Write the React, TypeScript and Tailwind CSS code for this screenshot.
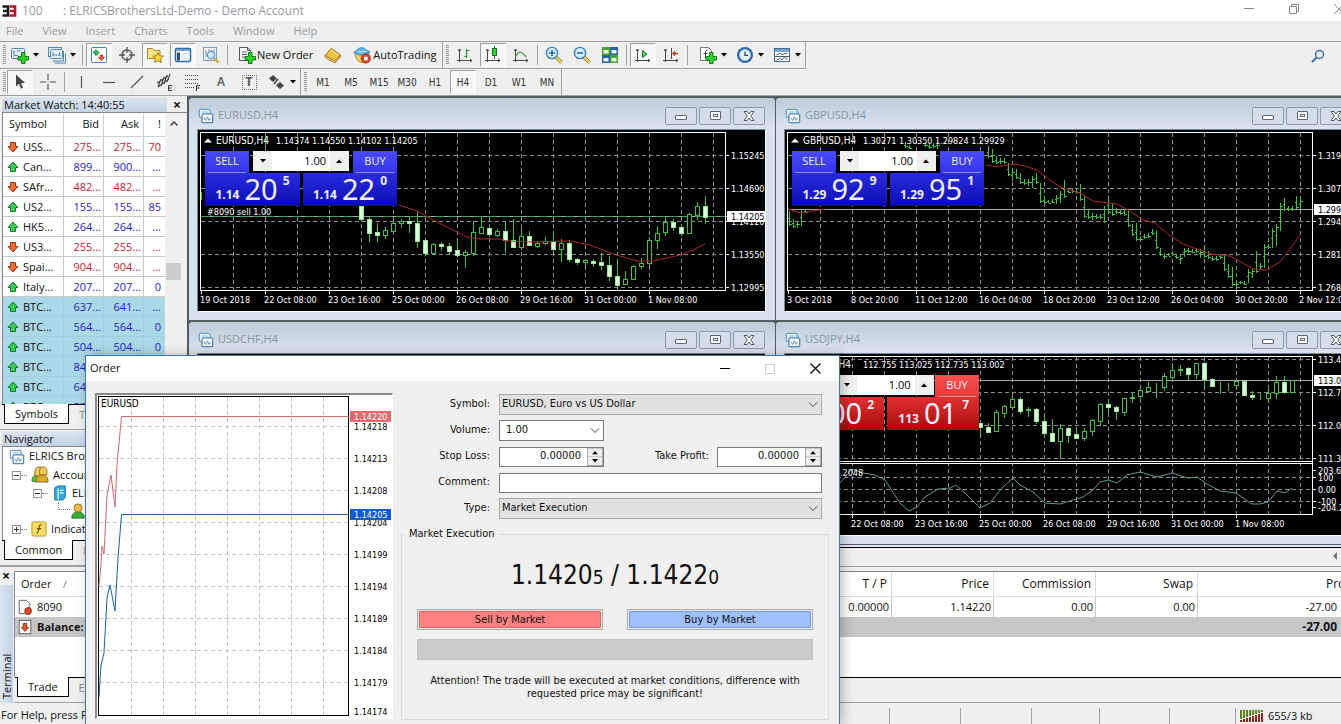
import { FC, ReactNode, useState } from "react";

interface Candle {
  high: number;
  top: number;
  bottom: number;
  low: number;
  filled: boolean;
}

interface Quote {
  symbol: string;
  bid: string;
  ask: string;
  spread: string;
  up: boolean;
  marked?: boolean;
}

interface PriceLabel {
  y: number;
  text: string;
}

// high, body top, body bottom, low, filled
type CandleRow = [number, number, number, number, number];

const toCandles = (rows: CandleRow[]): Candle[] =>
  rows.map(([high, top, bottom, low, filled]) => ({
    high,
    top,
    bottom,
    low,
    filled: filled === 1,
  }));

const eurusdCandles = toCandles([
  [76, 76, 89, 91, 1], [87, 89, 103, 111, 1], [93, 102, 105, 111, 1], [97, 100, 105, 108, 0],
  [92, 93, 101, 101, 0], [89, 91, 93, 97, 0], [87, 91, 93, 102, 1], [81, 93, 111, 117, 1],
  [109, 110, 123, 125, 1], [113, 114, 123, 124, 0], [112, 114, 116, 120, 1], [113, 116, 121, 124, 1],
  [108, 120, 125, 126, 1], [120, 122, 125, 137, 0], [91, 102, 123, 125, 0], [87, 97, 103, 103, 0],
  [97, 98, 104, 106, 1], [99, 101, 105, 106, 0], [91, 101, 110, 122, 1], [89, 110, 117, 117, 1],
  [98, 106, 117, 119, 0], [101, 106, 115, 115, 1], [111, 113, 116, 117, 0], [107, 111, 113, 114, 0],
  [102, 111, 119, 122, 1], [109, 113, 119, 131, 0], [110, 113, 129, 131, 1], [128, 129, 132, 134, 1],
  [129, 130, 132, 137, 0], [129, 131, 133, 136, 1], [123, 132, 135, 139, 1], [126, 135, 146, 150, 1],
  [129, 146, 155, 158, 1], [141, 149, 154, 154, 0], [135, 136, 149, 149, 0], [128, 133, 136, 138, 0],
  [107, 110, 133, 135, 0], [96, 103, 110, 118, 0], [86, 92, 102, 105, 0], [89, 92, 97, 100, 1],
  [94, 97, 103, 105, 1], [83, 84, 103, 103, 0], [72, 76, 85, 89, 0], [66, 76, 87, 93, 1],
]);

const usdjpyCandles = toCandles([
  [68, 69, 73, 83, 1], [69, 73, 78, 78, 1], [56, 58, 77, 77, 0], [51, 52, 59, 63, 0],
  [42, 45, 53, 53, 0], [43, 45, 57, 59, 1], [53, 55, 56, 62, 0], [54, 55, 67, 69, 1],
  [63, 67, 79, 81, 1], [65, 79, 87, 87, 1], [70, 74, 87, 104, 0], [73, 74, 81, 88, 1],
  [73, 80, 84, 84, 1], [74, 77, 84, 86, 0], [65, 66, 77, 81, 0], [49, 50, 67, 71, 0],
  [45, 50, 53, 58, 1], [52, 53, 57, 65, 1], [44, 44, 58, 61, 0], [38, 43, 44, 48, 0],
  [34, 36, 42, 44, 0], [28, 33, 37, 37, 0], [29, 33, 33, 43, 0], [19, 22, 33, 36, 0],
  [9, 16, 23, 26, 0], [11, 15, 16, 21, 0], [13, 14, 20, 25, 1], [9, 9, 20, 24, 0],
  [8, 9, 25, 35, 1], [24, 25, 32, 32, 1], [28, 31, 31, 39, 0], [29, 32, 32, 36, 0],
  [25, 27, 31, 35, 0], [27, 27, 41, 41, 1], [37, 41, 43, 45, 1], [39, 43, 43, 45, 0],
  [34, 39, 44, 47, 0], [22, 28, 39, 44, 0], [22, 28, 38, 39, 1], [26, 26, 38, 38, 0],
]);

// high, low
const gbpusdBars: [number, number][] = [
  [16, 28], [19, 33], [26, 34], [28, 34], [28, 34], [33, 46], [39, 51], [39, 49], [43, 54], [49, 55],
  [49, 56], [46, 58], [43, 54], [53, 73], [66, 74], [70, 73], [69, 73], [65, 74], [61, 73], [50, 68],
  [59, 63], [58, 63], [59, 64], [54, 71], [66, 88], [79, 89], [83, 90], [84, 89], [84, 89], [76, 93],
  [66, 84], [73, 86], [78, 84], [79, 85], [79, 86], [81, 97], [94, 106], [93, 111], [106, 112], [104, 109],
  [103, 108], [99, 105], [101, 119], [118, 126], [123, 129], [123, 126], [121, 126], [124, 129], [125, 134], [118, 127],
  [118, 123], [119, 123], [118, 123], [119, 128], [116, 128], [121, 129], [126, 131], [126, 131], [124, 129], [126, 141],
  [134, 148], [137, 156], [151, 157], [151, 154], [151, 155], [139, 153], [138, 148], [121, 143], [133, 139], [114, 138],
  [114, 119], [98, 118], [94, 116], [73, 101], [68, 81], [76, 81], [76, 81], [66, 79], [68, 81],
];

const quotes: Quote[] = [
  { symbol: "USS...", bid: "275...", ask: "275...", spread: "70", up: false },
  { symbol: "Can...", bid: "899...", ask: "900...", spread: "...", up: true },
  { symbol: "SAfr...", bid: "482...", ask: "482...", spread: "...", up: false },
  { symbol: "US2...", bid: "155...", ask: "155...", spread: "85", up: true },
  { symbol: "HK5...", bid: "264...", ask: "264...", spread: "...", up: true },
  { symbol: "US3...", bid: "255...", ask: "255...", spread: "...", up: false },
  { symbol: "Spai...", bid: "904...", ask: "904...", spread: "...", up: false },
  { symbol: "Italy...", bid: "207...", ask: "207...", spread: "0", up: true },
  { symbol: "BTC...", bid: "637...", ask: "641...", spread: "...", up: true, marked: true },
  { symbol: "BTC...", bid: "564...", ask: "564...", spread: "0", up: true, marked: true },
  { symbol: "BTC...", bid: "504...", ask: "504...", spread: "0", up: true, marked: true },
  { symbol: "BTC...", bid: "847...", ask: "848...", spread: "0", up: true, marked: true },
  { symbol: "BTC...", bid: "645...", ask: "645...", spread: "0", up: true, marked: true },
  { symbol: "BTC...", bid: "883...", ask: "883...", spread: "0", up: true, marked: true },
];

/* ---------- icons ---------- */

const Glyph: FC<{ children: ReactNode; size?: string }> = ({
  children,
  size = "size-[18px]",
}) => (
  <svg viewBox="0 0 18 18" className={`${size} shrink-0`} fill="none" aria-hidden="true">
    {children}
  </svg>
);

const Plus = () => (
  <path d="M10.5 6.5h3.500v4h3.500v3.500h-3.500v3.500h-3.500v-3.500H7v-3.500h3.500z" fill="#2fd42c" stroke="#0b7d12" />
);

const NewChartIcon = () => (
  <Glyph>
    <rect x="0.5" y="2.5" width="13" height="10" rx="1" fill="#e8f3fc" stroke="#4f86b5" />
    <path d="M3 4.5v6M3 9.5h4M2 6h2M6 5h4" stroke="#5a8fbb" />
    <Plus />
  </Glyph>
);

const ProfilesIcon = () => (
  <Glyph>
    <rect x="0.5" y="1.5" width="13" height="9" fill="#dcebf8" stroke="#4f86b5" />
    <path d="M15.5 5v10h-11M17.5 7.5v9.500h-11" stroke="#4f86b5" />
    <rect x="2.5" y="3.5" width="12" height="9" rx="1" fill="#e8f3fc" stroke="#4f86b5" />
    <path d="M5 5.5v5M4 9h9M11.5 6v4" stroke="#5a8fbb" />
  </Glyph>
);

const MarketWatchIcon = () => (
  <Glyph>
    <rect x="1.5" y="1.5" width="15" height="15" rx="1" fill="#fff" stroke="#4380bf" />
    <path d="M6 3.5 3 7h2v2h2.500V7h2z" fill="#39c25a" stroke="#147a2c" strokeWidth="0.7" />
    <path d="M11.5 14.500 8.500 11.500h1.800v-2.500h2.400v2.500h1.800z" fill="#f06040" stroke="#b02010" strokeWidth="0.7" />
  </Glyph>
);

const CrosshairIcon = () => (
  <Glyph>
    <circle cx="9" cy="9" r="5" stroke="#555" strokeWidth="1.5" />
    <path d="M9 1v6M9 11v6M1 9h6M11 9h6" stroke="#555" strokeWidth="1.3" />
  </Glyph>
);

const FolderStarIcon = () => (
  <Glyph>
    <path d="M1.500 2.500h5l1.500 2h6v8h-12.500z" fill="#fbe68a" stroke="#a8881c" />
    <path d="M12 6.500l1.600 3.300 3.700.4-2.700 2.500.8 3.800-3.400-1.900-3.400 1.900.8-3.800-2.700-2.500 3.700-.4z" fill="#ffd83a" stroke="#a07a10" />
  </Glyph>
);

const TerminalIcon = () => (
  <Glyph>
    <rect x="1.5" y="2.5" width="15" height="13" rx="1.5" fill="#fff" stroke="#2f69ab" strokeWidth="1.5" />
    <path d="M2 4h14" stroke="#6fa0d4" strokeWidth="2" />
    <path d="M3 6.5h3v8h-3z" fill="#2e4e78" />
    <path d="M8 7.5h7M8 10h7M8 12.5h7" stroke="#c8dcf0" />
  </Glyph>
);

const TesterIcon = () => (
  <Glyph>
    <rect x="1.5" y="1.5" width="13" height="13" fill="#f4f8fc" stroke="#7f9db8" />
    <path d="M4 4v7M12 3v7M7 3v2M9.5 4v2" stroke="#6f93b3" />
    <circle cx="9" cy="9" r="3.7" fill="#cfe6f7" stroke="#6b9cc6" strokeWidth="1.4" />
    <path d="M12 12l4.500 4.500" stroke="#d4a531" strokeWidth="2.4" />
  </Glyph>
);

const NewOrderIcon = () => (
  <Glyph>
    <path d="M1.500 1.500h8l3 3v10h-11z" fill="#fff" stroke="#555" />
    <path d="M9.500 1.500v3h3M4 6h5M4 8.500h5M4 11h3" stroke="#555" />
    <Plus />
  </Glyph>
);

const BookIcon = () => (
  <Glyph>
    <path d="M7 2.500 16.500 9l-5.500 6.500L1 9.500z" fill="#f0c040" stroke="#9b6a0c" />
    <path d="M1 9.500 11 15.500l5.500-6.500v2L11 17 1 11.500z" fill="#fbe7a6" stroke="#9b6a0c" strokeWidth="0.8" />
    <path d="M7 4l7 5" stroke="#fbe48c" strokeWidth="1.5" />
  </Glyph>
);

const AutoTradingIcon = () => (
  <Glyph>
    <path d="M2 7c0 5 3 9.500 7 9.500s7-4 7-9.500z" fill="#f5cf58" stroke="#a8801c" strokeWidth="0.8" />
    <path d="M.8 6.500C1.500 5 4 5 4.500 4 5.500 1 12 1 13 4c.5 1 3 1 4 2-3 4-13 4-16.200.5z" fill="#5fb4ea" stroke="#2a76ab" strokeWidth="0.8" />
    <path d="M4.500 5c2.500 1.200 6 1.200 8.500 0" stroke="#d5eefb" />
    <circle cx="12.8" cy="12.5" r="4.700" fill="#d8402a" stroke="#8f1d10" strokeWidth="0.6" />
    <rect x="11" y="10.700" width="3.600" height="3.600" fill="#fff" />
  </Glyph>
);

const Axes = () => (
  <path d="M3.500 3v13M1 14.500h15M2 5l1.500-2L5 5M14 13l2 1.500-2 1.500" stroke="#4a4a4a" />
);

const BarChartIcon = () => (
  <Glyph>
    <Axes />
    <path d="M10.500 3v9M8.500 10.500h2M10.500 4.500h3" stroke="#1f8f2f" strokeWidth="1.2" />
  </Glyph>
);

const CandleChartIcon = () => (
  <Glyph>
    <Axes />
    <path d="M10.500 0v13" stroke="#14791f" />
    <rect x="8.5" y="2.5" width="4" height="7" fill="#35d33b" stroke="#14791f" />
  </Glyph>
);

const LineChartIcon = () => (
  <Glyph>
    <Axes />
    <path d="M3.500 11C7 4 9 5 14.500 11" stroke="#3b9a4a" strokeWidth="1.2" />
  </Glyph>
);

const ZoomIcon: FC<{ plus?: boolean }> = ({ plus }) => (
  <Glyph>
    <path d="M11 11l5.500 5.500" stroke="#8f7420" strokeWidth="3.4" />
    <path d="M11 11l5.500 5.500" stroke="#f2d768" strokeWidth="2" />
    <circle cx="7" cy="7" r="5.600" fill="#d6ebfa" stroke="#3e82bd" strokeWidth="1.4" />
    <path d={plus ? "M4 7h6M7 4v6" : "M4 7h6"} stroke="#2d6ca5" strokeWidth="1.6" />
  </Glyph>
);

const TilesIcon = () => (
  <Glyph>
    <path d="M1 1h8v8H1zM9 9h8v8H9z" fill="#49a52c" />
    <path d="M9 1h8v8H9zM1 9h8v8H1z" fill="#2b5fb0" />
    <path d="M2.500 4h5v3.500h-5zM10.500 4h5v3.500h-5zM2.500 12h5v3.500h-5zM10.500 12h5v3.500h-5z" fill="#e6f2e6" />
  </Glyph>
);

const AutoScrollIcon = () => (
  <Glyph>
    <Axes />
    <path d="M8.500 4.500v7l4.500-3.500z" fill="#5fd067" stroke="#14791f" />
  </Glyph>
);

const ShiftIcon = () => (
  <Glyph>
    <Axes />
    <path d="M9.500 2v11" stroke="#4a4a4a" />
    <path d="M16 7.500h-5M13 5.500l-2 2 2 2" stroke="#b04024" strokeWidth="1.3" />
  </Glyph>
);

const IndicatorsIcon = () => (
  <Glyph>
    <path d="M1.500 1.500h8l3 3v10h-11z" fill="#fff" stroke="#777" />
    <path d="M8.500 4.500c-2-.5-2 1-2 2.500v5M4.500 7.500h4" stroke="#444" />
    <Plus />
  </Glyph>
);

const ClockIcon = () => (
  <Glyph>
    <circle cx="9" cy="9" r="8" fill="#2a65a8" />
    <circle cx="9" cy="9" r="5.600" fill="#eaf4fc" stroke="#8fc0e8" />
    <path d="M9 5.500V9.500h3" stroke="#335" strokeWidth="1.2" />
  </Glyph>
);

const TemplateIcon = () => (
  <Glyph>
    <rect x="1.5" y="2.5" width="15" height="13" fill="#fff" stroke="#40698f" />
    <path d="M2 4.500h14" stroke="#7aa7d0" strokeWidth="3" />
    <path d="M2 10.500h14M3.500 9l3-1.500 3 1 5-1.500M3.500 14l3-1.500 2 1 3-2 3 2" stroke="#40566b" />
  </Glyph>
);

const PointerIcon = () => (
  <Glyph>
    <path d="M5 1.500v12l3-2.800 2 5 2-.9-2-4.800h4z" fill="#444" />
  </Glyph>
);

const CrossIcon = () => (
  <Glyph>
    <path d="M9 1v6M9 11v6M1 9h6M11 9h6M8.500 9h1" stroke="#555" strokeWidth="1.2" />
  </Glyph>
);

const StrokeIcon: FC<{ d: string }> = ({ d }) => (
  <Glyph>
    <path d={d} stroke="#555" strokeWidth="1.2" />
  </Glyph>
);

const ChannelIcon = () => (
  <Glyph>
    <path d="M1 10 12 3M2 14 13 6M5 6l-3 8M8 4l-3 9M11 2 8 11M14 1l-3 8" stroke="#4a4a4a" strokeWidth="1.2" />
    <path d="M16 12.500h-3.500v5H16M12.500 15H15.500" stroke="#333" />
  </Glyph>
);

const FiboIcon = () => (
  <Glyph>
    <path d="M1 2.500h13M1 6.500h13M1 10.500h13M1 14.500h9" stroke="#444" strokeDasharray="1 1" />
    <path d="M16 12.500h-3.500V18M12.500 15H15.500" stroke="#333" />
  </Glyph>
);

const ArrowsIcon = () => (
  <Glyph>
    <path d="M5 2 9 5.500 5 9 1 5.500z" fill="#444" />
    <path d="M12 9l4 3.500-4 3.500-4-3.500z" fill="#444" />
    <path d="M6 11l4-5" stroke="#444" strokeWidth="1.5" />
  </Glyph>
);

const ChartWindowIcon = () => (
  <Glyph size="size-4">
    <rect x="1.5" y="1.5" width="12" height="9" rx="1" fill="#f3f9fd" stroke="#6d9fca" strokeWidth="1.4" />
    <rect x="4.5" y="6.5" width="12" height="10" rx="1" fill="#fff" stroke="#4d86bb" strokeWidth="1.4" />
    <path d="M4 4.500h7" stroke="#86b2d8" />
    <path d="M7 11l1.500 3 2-4 2 4 1.500-3" stroke="#4d86bb" />
  </Glyph>
);

const DirectionIcon: FC<{ up: boolean }> = ({ up }) => (
  <svg viewBox="0 0 12 12" className="size-3 shrink-0" aria-hidden="true">
    {up ? (
      <path d="M6 1 11 6.500H8.500V10.500h-5V6.500H1z" fill="#3cc957" stroke="#137a2b" />
    ) : (
      <path d="M6 11 11 5.500H8.500V1.500h-5V5.500H1z" fill="#ee6a3a" stroke="#a8300c" />
    )}
  </svg>
);

const Caret = () => (
  <svg viewBox="0 0 6 4" className="h-1 w-1.5 shrink-0" aria-hidden="true">
    <path d="M0 0h6L3 3.500z" fill="#000" />
  </svg>
);

const Chevron = () => (
  <svg viewBox="0 0 10 6" className="pointer-events-none absolute top-2 right-1 h-1.5 w-2.5" fill="none" aria-hidden="true">
    <path d="M1 .5 5 4.500 9 .5" stroke="#444" />
  </svg>
);

const ServerIcon = () => (
  <Glyph size="size-4">
    <path d="M3 3l4-2h8v13l-3 3H3z" fill="#35a7dd" stroke="#1874a5" />
    <path d="M7 4v13M9 6h4M9 9h4" stroke="#d2effb" strokeWidth="1.5" />
  </Glyph>
);

const UserIcon = () => (
  <Glyph size="size-4">
    <path d="M2 17c0-5 3-7 7-7s7 2 7 7z" fill="#3fae35" stroke="#1c6e18" />
    <circle cx="9" cy="5.5" r="4.500" fill="#e8bd4b" stroke="#94691a" />
  </Glyph>
);

const UsersIcon = () => (
  <Glyph>
    <path d="M1 15c0-4 2-6 5-6v7z" fill="#5fc442" stroke="#2a7a1e" />
    <path d="M4 10c-1-6 1-9 4-9 2 0 3 1 3 3v6z" fill="#f0ce62" stroke="#94691a" />
    <path d="M9 9c-1-5 0-8 3-8s5 3 3.500 8z" fill="#f0ce62" stroke="#94691a" />
    <path d="M5 16c0-5 2-7 6-7s6 2 6 7z" fill="#d9a928" stroke="#94691a" />
  </Glyph>
);

const FunctionIcon = () => (
  <Glyph size="size-4">
    <rect x="1" y="1" width="16" height="16" rx="2" fill="#f7dc62" stroke="#b38f1c" />
    <path d="M12 4.500c-2.500-.8-2.700 1-3.200 4.500S8 13.500 6 13.500M6.500 8.500h5" stroke="#6d5207" strokeWidth="1.4" />
  </Glyph>
);

/* ---------- tool bars ---------- */

const Grip = () => (
  <div className="ml-[3px] h-5 w-[3px] shrink-0 bg-[repeating-linear-gradient(#9a9a9a_0_1px,#efefef_1px_2px)]" />
);

const Divider = () => <div className="mx-0.5 h-5 w-px shrink-0 bg-[#a0a0a0]" />;

const ToolButton: FC<{ label: string; pressed?: boolean; menu?: boolean; children: ReactNode }> = ({
  label,
  pressed,
  menu,
  children,
}) => (
  <button
    type="button"
    aria-label={label}
    className={`flex h-6 shrink-0 items-center justify-center gap-1 border ${
      menu ? "w-[37px]" : "mx-px w-[26px]"
    } ${
      pressed
        ? "border-t-[#a0a0a0] border-r-[#fafafa] border-b-[#fafafa] border-l-[#a0a0a0] bg-[#f7f7f7]"
        : "border-transparent"
    }`}
  >
    {children}
    {menu && <Caret />}
  </button>
);

const MenuBar = () => (
  <nav className="flex h-5 shrink-0 items-center gap-[7px] bg-[#efefef] text-[#9a9a9a]">
    {["File", "View", "Insert", "Charts", "Tools", "Window", "Help"].map((item) => (
      <button key={item} type="button" className="px-1.5">
        {item}
      </button>
    ))}
  </nav>
);

const StandardToolbar = () => (
  <div className="flex h-[27px] shrink-0 items-center bg-[#efefef]">
    <div className="flex h-full items-center border-b border-[#a0a0a0]">
      <Grip />
      <ToolButton label="New chart" menu><NewChartIcon /></ToolButton>
      <ToolButton label="Profiles" menu><ProfilesIcon /></ToolButton>
      <Divider />
      <ToolButton label="Market Watch" pressed><MarketWatchIcon /></ToolButton>
      <ToolButton label="Data Window"><CrosshairIcon /></ToolButton>
      <ToolButton label="Navigator" pressed><FolderStarIcon /></ToolButton>
      <ToolButton label="Terminal" pressed><TerminalIcon /></ToolButton>
      <ToolButton label="Strategy Tester"><TesterIcon /></ToolButton>
      <Divider />
      <button type="button" className="flex items-center gap-px pr-1.5 pl-2">
        <NewOrderIcon />
        New Order
      </button>
      <ToolButton label="MetaEditor"><BookIcon /></ToolButton>
      <button type="button" className="flex items-center gap-0.5 px-1.5">
        <AutoTradingIcon />
        AutoTrading
      </button>
      <div className="h-full w-px bg-[#a0a0a0]" />
      <Grip />
      <div className="ml-0.5 flex items-center">
        <ToolButton label="Bar chart"><BarChartIcon /></ToolButton>
        <ToolButton label="Candlesticks" pressed><CandleChartIcon /></ToolButton>
        <ToolButton label="Line chart"><LineChartIcon /></ToolButton>
      </div>
      <Divider />
      <ToolButton label="Zoom in"><ZoomIcon plus /></ToolButton>
      <ToolButton label="Zoom out"><ZoomIcon /></ToolButton>
      <ToolButton label="Tile windows"><TilesIcon /></ToolButton>
      <Divider />
      <ToolButton label="Auto scroll" pressed><AutoScrollIcon /></ToolButton>
      <ToolButton label="Chart shift"><ShiftIcon /></ToolButton>
      <Divider />
      <div className="ml-1 flex items-center">
        <ToolButton label="Indicators" menu><IndicatorsIcon /></ToolButton>
        <ToolButton label="Periods" menu><ClockIcon /></ToolButton>
        <ToolButton label="Templates" menu><TemplateIcon /></ToolButton>
      </div>
      <div className="h-full w-px bg-[#a0a0a0]" />
    </div>
    <button type="button" aria-label="Search" className="mr-4 ml-auto">
      <svg viewBox="0 0 14 14" className="size-3.5" fill="none" aria-hidden="true">
        <circle cx="8.5" cy="5.5" r="4" stroke="#3d6fb0" strokeWidth="1.5" />
        <path d="M5.500 8.500 1 13" stroke="#3d6fb0" strokeWidth="2" />
      </svg>
    </button>
  </div>
);

const LineToolbar = () => (
  <div className="flex h-[27px] shrink-0 items-center border-b border-[#a0a0a0] bg-[#efefef] text-[#333]">
    <Grip />
    <ToolButton label="Cursor" pressed><PointerIcon /></ToolButton>
    <ToolButton label="Crosshair"><CrossIcon /></ToolButton>
    <Divider />
    <ToolButton label="Vertical line"><StrokeIcon d="M9.500 3v12" /></ToolButton>
    <ToolButton label="Horizontal line"><StrokeIcon d="M3 9.500h12" /></ToolButton>
    <ToolButton label="Trendline"><StrokeIcon d="M3 15 15 3" /></ToolButton>
    <ToolButton label="Equidistant channel"><ChannelIcon /></ToolButton>
    <ToolButton label="Fibonacci retracement"><FiboIcon /></ToolButton>
    <ToolButton label="Text"><span className="text-[12px] font-semibold text-[#555]">A</span></ToolButton>
    <ToolButton label="Text label">
      <span className="flex size-[15px] items-center justify-center border border-dotted border-[#777] text-[12px] font-bold text-[#555]">T</span>
    </ToolButton>
    <ToolButton label="Arrows" menu><ArrowsIcon /></ToolButton>
    <div className="h-full w-px bg-[#a0a0a0]" />
    <Grip />
    <div className="ml-0.5 flex items-center">
      {["M1", "M5", "M15", "M30", "H1", "H4", "D1", "W1", "MN"].map((period) => (
        <ToolButton key={period} label={period} pressed={period === "H4"}>
          <span className="font-['DejaVu_Sans_Condensed','Noto_Sans',sans-serif] text-[10px]">{period}</span>
        </ToolButton>
      ))}
    </div>
    <div className="h-full w-px bg-[#a0a0a0]" />
  </div>
);

/* ---------- left side panels ---------- */

const PanelTitle: FC<{ children: ReactNode; closable?: boolean }> = ({ children, closable }) => (
  <div className="mt-px ml-0.5 flex h-[15px] shrink-0 items-center">
    <h2 className="flex-1 bg-linear-to-b from-[#dce6f1] to-[#c3d2e3] pl-0.5 leading-[15px]">{children}</h2>
    {closable && (
      <button type="button" aria-label="Close" className="w-5 text-center text-[14px] font-bold leading-3">
        ×
      </button>
    )}
  </div>
);

const PanelTabs: FC<{ active: string; other: string }> = ({ active, other }) => (
  <div className="flex h-[26px] shrink-0 items-start border-b border-[#a0a0a0] pl-0.5">
    <div className="h-px w-0.5 bg-black" />
    <button type="button" className="h-5 border-x border-b border-black bg-white px-2.5 text-[11px] leading-[18px]">
      {active}
    </button>
    <button type="button" className="h-5 flex-1 overflow-hidden border-t border-black pl-2.5 text-left text-[11px] leading-[18px] whitespace-nowrap text-[#888]">
      {other}
    </button>
  </div>
);

const MarketWatch = () => (
  <section className="flex min-h-0 flex-1 flex-col">
    <PanelTitle closable>Market Watch: 14:40:55</PanelTitle>
    <div className="ml-0.5 flex min-h-0 flex-1 overflow-hidden border-t border-l border-[#828790]">
      <table className="w-[162px] table-fixed border-separate border-spacing-0 self-start bg-white">
        <colgroup>
          <col className="w-[61px]" />
          <col className="w-10" />
          <col className="w-10" />
          <col />
        </colgroup>
        <thead>
          <tr className="h-6">
            <th className="border-r border-b border-[#d0d0d0] pl-1.5 text-left font-normal">Symbol</th>
            <th className="border-r border-b border-[#d0d0d0] pr-1 text-right font-normal">Bid</th>
            <th className="border-r border-b border-[#d0d0d0] pr-1 text-right font-normal">Ask</th>
            <th className="border-b border-[#d0d0d0] pr-1 text-right font-normal">!</th>
          </tr>
        </thead>
        <tbody>
          {quotes.map((quote, index) => {
            const line = quote.marked ? "border-[#a2cfe0]" : "border-[#c8c8c8]";
            const color = quote.up ? "text-[#1c1ccc]" : "text-[#c8202c]";
            return (
              <tr key={index} className={quote.marked ? "bg-[#abd8e6]" : "bg-white"}>
                <td className={`h-5 border-r border-b pl-1 ${line}`}>
                  <span className="flex items-center gap-1 leading-4">
                    <DirectionIcon up={quote.up} />
                    {quote.symbol}
                  </span>
                </td>
                <td className={`border-r border-b pr-0.5 text-right leading-4 ${line} ${color}`}>{quote.bid}</td>
                <td className={`border-r border-b pr-0.5 text-right leading-4 ${line} ${color}`}>{quote.ask}</td>
                <td className={`border-b pr-1 text-right leading-4 ${line} ${color}`}>{quote.spread}</td>
              </tr>
            );
          })}
        </tbody>
      </table>
      <div className="flex w-[17px] flex-col items-center bg-[#f0f0f0]">
        <svg viewBox="0 0 8 5" className="mt-2 h-[5px] w-2" fill="none" aria-hidden="true">
          <path d="M.5 4.500 4 1l3.500 3.500" stroke="#444" strokeWidth="1.5" />
        </svg>
        <div className="mt-[137px] h-[17px] w-[15px] bg-[#cdcdcd]" />
      </div>
    </div>
    <PanelTabs active="Symbols" other="Tick Chart" />
  </section>
);

const Expander: FC<{ open?: boolean }> = ({ open }) => (
  <span className="flex shrink-0 items-center">
    <svg viewBox="0 0 9 9" className="size-[9px]" aria-hidden="true">
      <rect x="0.5" y="0.5" width="8" height="8" fill="#fff" stroke="#919191" />
      <path d={open ? "M2 4.500h5" : "M2 4.500h5M4.500 2v5"} stroke="#333" />
    </svg>
    <span className="w-1.5 border-t border-dotted border-[#808080]" />
  </span>
);

const Navigator = () => (
  <section className="flex h-[136px] shrink-0 flex-col">
    <PanelTitle>Navigator</PanelTitle>
    <ul className="ml-0.5 min-h-0 flex-1 overflow-hidden border-t border-l border-[#828790] bg-white whitespace-nowrap">
      <li className="flex h-[19px] items-center gap-1 pl-1.5"><ChartWindowIcon />ELRICS Brothers</li>
      <li className="flex h-[18px] items-center gap-1 pl-[9px]"><Expander open /><UsersIcon />Accounts</li>
      <li className="flex h-[18px] items-center gap-1 pl-[30px]"><Expander open /><ServerIcon />ELRICS</li>
      <li className="flex h-[18px] items-center pl-[55px]">
        <span className="h-2 w-3 self-start border-b border-l border-dotted border-[#808080]" />
        <UserIcon />
      </li>
      <li className="flex h-[18px] items-center gap-1 pl-[9px]"><Expander /><FunctionIcon />Indicators</li>
    </ul>
    <PanelTabs active="Common" other="Favorites" />
  </section>
);

/* ---------- charts ---------- */

const CANDLE_STEP = 8;
const BAR_STEP = 4;

const CandleSeries: FC<{ candles: Candle[]; start: number }> = ({ candles, start }) => (
  <g stroke="#44c044" shapeRendering="crispEdges">
    {candles.map((c, i) => {
      const x = start + i * CANDLE_STEP;
      return (
        <g key={i}>
          <path d={`M${x} ${c.high}V${c.low + 1}`} />
          <rect
            x={x - 2}
            y={c.top + 0.5}
            width={4}
            height={Math.max(c.bottom - c.top, 0)}
            fill={c.filled ? "#d8ffd8" : "#000"}
            stroke={c.filled ? "#9be89b" : "#44c044"}
          />
        </g>
      );
    })}
  </g>
);

const BarSeries: FC<{ bars: [number, number][]; start: number }> = ({ bars, start }) => (
  <g stroke="#44c044" shapeRendering="crispEdges">
    {bars.map(([high, low], i) => {
      const x = start + i * BAR_STEP;
      const next = bars[i + 1];
      const close = next && next[0] + next[1] > high + low ? low - 2 : high + 3;
      return <path key={i} d={`M${x} ${high}V${low}M${x} ${close + 0.5}h2M${x - 2} ${(high + low) / 2}h2`} />;
    })}
  </g>
);

interface ChartProps {
  title: string;
  quote: string;
  times: string[];
  prices: PriceLabel[];
  gridRows: number[];
  last: PriceLabel;
  divided?: boolean;
  children?: ReactNode;
}

const Chart: FC<ChartProps> = ({ title, quote, times, prices, gridRows, last, divided, children }) => (
  <svg
    viewBox="0 0 567 181"
    className="block h-[181px] w-[567px] bg-black font-['DejaVu_Sans_Condensed','Noto_Sans',sans-serif] text-[9px]"
    fill="none"
    role="img"
    aria-label={title}
  >
    <g stroke="#8a8f94" strokeDasharray="4 3" shapeRendering="crispEdges">
      {Array.from({ length: 16 }, (_, i) => (
        <path key={i} d={`M${35.5 + i * 32} 3V160`} />
      ))}
      {gridRows.map((y) => (
        <path key={y} d={`M3 ${y + 0.5}H527`} />
      ))}
    </g>
    <path d={`M3 ${last.y + 0.5}H532`} stroke="#a4a8a8" shapeRendering="crispEdges" />
    {children}
    <g stroke="#fff" shapeRendering="crispEdges">
      <rect x="2.5" y="2.5" width="525" height="158" />
      {divided && <path d="M3 107.500H527M3 109.500H527" />}
      {divided && <path d="M3 108.500H527" stroke="#000" />}
      {times.map((time, i) => (
        <path key={time} d={`M${3.5 + i * 64} 161v3`} />
      ))}
      {prices.map((price) => (
        <path key={price.text} d={`M528 ${price.y + 0.5}h3`} />
      ))}
    </g>
    <g fill="#fff">
      <path d="M6 12.500h8l-4-4z" />
      <text x="18" y="14" className="text-[10px]">{title}</text>
      <text x="78" y="14">{quote}</text>
      {times.map((time, i) => (
        <text key={time} x={2 + i * 64} y="173">{time}</text>
      ))}
      {prices.map((price) => (
        <text key={price.text} x="533" y={price.y + 4}>{price.text}</text>
      ))}
      <rect x="529" y={last.y - 5} width="38" height="11" />
    </g>
    <text x="533" y={last.y + 4} fill="#000">{last.text}</text>
  </svg>
);

interface DealProps {
  base: string;
  sell: [string, string];
  buy: [string, string];
  red?: boolean;
}

// One click trading block in the corner of a chart
const QuickDeal: FC<DealProps> = ({ base, sell, buy, red }) => {
  const tab = red
    ? "bg-linear-to-b from-[#f85050] to-[#e83a3a]"
    : "bg-linear-to-b from-[#4a4af8] to-[#3434ee]";
  const rule = red ? "border-[#ff9a9a]" : "border-[#8f8fff]";
  const price = red
    ? "bg-linear-to-b from-[#e03030] to-[#a80808]"
    : "bg-linear-to-b from-[#2b2be0] to-[#0a0ab0]";
  return (
    <div className={`absolute top-[21px] left-[7px] text-[#eef] ${red ? "w-[187px]" : "w-[192px]"}`}>
      <div className="flex items-start justify-between">
        <button type="button" className={`h-[22px] w-11 px-[3px] leading-5 ${tab}`}>
          <span className={`block h-[22px] border-b ${rule}`}>SELL</span>
        </button>
        <div className="flex h-5 w-24 bg-[#f0f0f0]">
          <button type="button" aria-label="Less" className="flex w-[19px] items-center justify-center"><Caret /></button>
          <input
            aria-label="Lots"
            defaultValue="1.00"
            className="w-[58px] min-w-0 bg-white pr-1 text-right text-[11px] text-black"
          />
          <button type="button" aria-label="More" className="flex w-[19px] rotate-180 items-center justify-center"><Caret /></button>
        </div>
        <button type="button" className={`h-[22px] w-11 px-[3px] leading-5 ${tab}`}>
          <span className={`block h-[22px] border-b ${rule}`}>BUY</span>
        </button>
      </div>
      <div className="grid grid-cols-2 gap-x-[3px]">
        {[sell, buy].map(([big, small], i) => (
          <button
            key={i}
            type="button"
            className={`flex h-[33px] items-start justify-end gap-[5px] pr-2.5 font-['Noto_Sans',sans-serif] ${price}`}
          >
            <span className="mt-[14px] text-[12px] font-bold leading-4">{base}</span>
            <span className="text-[29px] leading-8">{big}</span>
            <span className="mt-0.5 text-[12px] font-bold leading-3">{small}</span>
          </button>
        ))}
      </div>
    </div>
  );
};

const frameButton =
  "flex h-[18px] w-8 items-center justify-center rounded-[2px] border border-[#8d9cad] bg-[#d3deea]";

const ChartWindow: FC<{ title: string; children: ReactNode }> = ({ title, children }) => (
  <section className="w-[586px] shrink-0 rounded-t-[4px] bg-[#d8e2ed] pb-2 pl-2">
    <header className="-ml-2 flex h-[31px] items-center rounded-t-[4px] bg-linear-to-b from-[#bccbda] to-[#dae4ee] pt-1 pl-[9px]">
      <ChartWindowIcon />
      <h3 className="ml-1 flex-1 text-[11px] text-[#8a96a2]">{title}</h3>
      <div className="mr-2.5 flex gap-0.5">
        <button type="button" aria-label="Minimize" className={frameButton}>
          <span className="mt-1 h-[5px] w-3 rounded-[1px] border border-[#5b6878] bg-white" />
        </button>
        <button type="button" aria-label="Restore" className={frameButton}>
          <span className="flex h-[9px] w-[11px] items-center justify-center rounded-[1px] border border-[#5b6878] bg-white">
            <span className="h-[3px] w-[5px] border border-[#5b6878]" />
          </span>
        </button>
        <button type="button" aria-label="Close" className={frameButton}>
          <svg viewBox="0 0 12 10" className="h-2.5 w-3" aria-hidden="true">
            <path d="M1 .5h3L6 3 8 .5h3L7.700 5 11 9.500H8L6 7 4 9.500H1L4.300 5z" fill="#fff" stroke="#4c5866" />
          </svg>
        </button>
      </div>
    </header>
    <div className="relative h-[183px] w-[569px] overflow-hidden border border-t-[#7c8894] border-r-white border-b-white border-l-[#7c8894] bg-black">
      {children}
    </div>
  </section>
);

const EurUsdWindow = () => (
  <ChartWindow title="EURUSD,H4">
    <Chart
      title="EURUSD,H4"
      quote="1.14374 1.14550 1.14102 1.14205"
      times={["19 Oct 2018", "22 Oct 08:00", "23 Oct 16:00", "25 Oct 00:00", "26 Oct 08:00", "29 Oct 16:00", "31 Oct 00:00", "1 Nov 08:00"]}
      gridRows={[25, 58, 91, 124, 157]}
      prices={[
        { y: 25, text: "1.15245" },
        { y: 58, text: "1.14690" },
        { y: 91, text: "1.14120" },
        { y: 124, text: "1.13550" },
        { y: 157, text: "1.12995" },
      ]}
      last={{ y: 86, text: "1.14205" }}
    >
      <path d="M3 86.500H527" stroke="#3f9f5a" strokeDasharray="9 4" />
      <path d="M67.500 8v10M3.500 62v8" stroke="#44c044" />
      <CandleSeries candles={eurusdCandles} start={163.5} />
      <polyline
        points="201,75 219,81 239,92 269,107 282,109 302,109 309,111 332,112 372,111 392,115 415,124 439,131 455,131 482,125 495,120 507,114"
        stroke="#b02626"
      />
      <text x="9" y="85" fill="#fff">#8090 sell 1.00</text>
    </Chart>
    <QuickDeal base="1.14" sell={["20", "5"]} buy={["22", "0"]} />
  </ChartWindow>
);

const GbpUsdWindow = () => (
  <ChartWindow title="GBPUSD,H4">
    <Chart
      title="GBPUSD,H4"
      quote="1.30271 1.30350 1.29824 1.29929"
      times={["3 Oct 2018", "8 Oct 20:00", "11 Oct 12:00", "16 Oct 04:00", "18 Oct 20:00", "23 Oct 12:00", "26 Oct 04:00", "30 Oct 20:00", "2 Nov 12:00"]}
      gridRows={[25, 58, 91, 124, 157]}
      prices={[
        { y: 25, text: "1.319" },
        { y: 58, text: "1.307" },
        { y: 91, text: "1.294" },
        { y: 124, text: "1.281" },
        { y: 157, text: "1.268" },
      ]}
      last={{ y: 79, text: "1.299" }}
    >
      <BarSeries bars={[[81, 96], [89, 98], [91, 98], [79, 96], [79, 83]]} start={4.5} />
      <BarSeries bars={[[12, 18], [15, 19]]} start={120.5} />
      <BarSeries bars={[[13, 17], [14, 19], [13, 18], [12, 19]]} start={140.5} />
      <BarSeries bars={gbpusdBars} start={203.5} />
      <polyline points="3,79 16,83 40,79" stroke="#b02626" />
      <polyline
        points="201,35 212,37 228,34 240,36 252,40 265,50 275,57 285,60 295,63 308,71 332,74 345,81 358,90 370,93 384,105 398,114 412,119 425,124 445,126 458,133 468,139 482,140 495,132 505,119 515,105"
        stroke="#b02626"
      />
    </Chart>
    <QuickDeal base="1.29" sell={["92", "9"]} buy={["95", "1"]} />
  </ChartWindow>
);

const UsdJpyWindow = () => (
  <ChartWindow title="USDJPY,H4">
    <Chart
      title="USDJPY,H4"
      quote="112.755 113.025 112.735 113.002"
      times={["19 Oct 2018", "22 Oct 08:00", "23 Oct 16:00", "25 Oct 00:00", "26 Oct 08:00", "29 Oct 16:00", "31 Oct 00:00", "1 Nov 08:00"]}
      gridRows={[5, 38, 71, 104, 123, 135, 147]}
      prices={[
        { y: 5, text: "113.4" },
        { y: 38, text: "112.7" },
        { y: 71, text: "112.0" },
        { y: 104, text: "111.3" },
        { y: 116, text: "203.67" },
        { y: 123, text: "100" },
        { y: 135, text: "0.00" },
        { y: 147, text: "-100" },
        { y: 153, text: "-204.2" },
      ]}
      last={{ y: 26, text: "113.0" }}
      divided
    >
      <CandleSeries candles={usdjpyCandles} start={195.5} />
      <polyline
        points="55,129 67,115 78,119 90,121 100,126 115,149 124,157 132,153 140,143 153,135 165,134 171,131 182,141 195,154 205,149 218,133 228,124 235,131 248,138 260,149 275,150 285,147 298,143 308,136 315,128 323,126 332,129 342,121 355,118 372,123 387,119 403,124 412,123 422,130 435,137 451,139 467,150 475,150 483,148 492,137 500,139 507,134"
        stroke="#5f9a94"
      />
      <text x="55" y="122" fill="#fff">.2048</text>
    </Chart>
    <QuickDeal base="113" sell={["00", "2"]} buy={["01", "7"]} red />
  </ChartWindow>
);

const Workspace = () => (
  <div className="flex min-w-0 flex-1 flex-col overflow-hidden">
    <div className="grid shrink-0 grid-cols-[586px_586px] gap-x-px gap-y-0.5 border-t-2 border-b border-l-2 border-[#555b63] bg-[#555b63]">
      <EurUsdWindow />
      <GbpUsdWindow />
      <ChartWindow title="USDCHF,H4">
        <div />
      </ChartWindow>
      <UsdJpyWindow />
    </div>
    <div className="h-[3px] shrink-0 border-b border-black bg-[#e3e8ee]" />
    <div className="flex flex-1 items-start justify-end pt-1 pr-1">
      <svg viewBox="0 0 4 8" className="h-2 w-1" aria-hidden="true">
        <path d="M4 0v8L0 4z" fill="#777" />
      </svg>
    </div>
  </div>
);

/* ---------- terminal ---------- */

const headCell = "border-r border-b border-[#dcdcdc] pr-1 text-right font-normal";
const bodyCell = "border-r border-[#c8c8c8] pr-0.5 text-right";

const Terminal = () => (
  <section className="flex h-[137px] shrink-0 border-t border-[#a0a0a0] bg-[#efefef]">
    <div className="flex w-3.5 shrink-0 flex-col items-start">
      <button type="button" aria-label="Close terminal" className="h-[18px] w-3 text-[14px] font-bold leading-4">×</button>
      <h2 className="w-[13px] flex-1 rotate-180 bg-linear-to-l from-[#dce6f1] to-[#c3d2e3] pt-1 text-[11px] leading-[13px] [writing-mode:vertical-rl]">
        Terminal
      </h2>
    </div>
    <div className="mt-1 flex min-w-0 flex-1 flex-col">
      <div className="min-h-0 flex-1 overflow-hidden border-t border-l border-[#828790] bg-white">
        <table className="w-full table-fixed border-separate border-spacing-0">
          <colgroup>
            <col />
            <col className="w-[102px]" />
            <col className="w-[102px]" />
            <col className="w-[102px]" />
            <col className="w-[102px]" />
            <col className="w-[143px]" />
          </colgroup>
          <thead>
            <tr className="h-[25px] text-[12px]">
              <th className="border-b border-[#dcdcdc] pl-1.5 text-left text-[11px] font-normal">
                <span className="flex items-center gap-3">
                  Order
                  <svg viewBox="0 0 4 7" className="h-[7px] w-1" aria-hidden="true">
                    <path d="M.5 7 3.500 0" stroke="#888" />
                  </svg>
                </span>
              </th>
              <th className={headCell}>T / P</th>
              <th className={headCell}>Price</th>
              <th className={headCell}>Commission</th>
              <th className={headCell}>Swap</th>
              <th className="overflow-hidden border-b border-[#dcdcdc] pl-32 text-left font-normal whitespace-nowrap">Profit</th>
            </tr>
          </thead>
          <tbody>
            <tr className="h-5">
              <td>
                <span className="flex items-center gap-1 pl-0.5 leading-4">
                  <Glyph size="size-4">
                    <path d="M2.500 1.500h8l4 4v11h-12z" fill="#fff" stroke="#555" />
                    <circle cx="12.5" cy="13.5" r="3.800" fill="#dc4a2a" stroke="#8d2411" />
                  </Glyph>
                  8090
                </span>
              </td>
              <td className={bodyCell}>0.00000</td>
              <td className={bodyCell}>1.14220</td>
              <td className={bodyCell}>0.00</td>
              <td className={bodyCell}>0.00</td>
              <td className="pr-1 text-right">-27.00</td>
            </tr>
            <tr className="h-5 bg-[#c6c6c6] font-bold">
              <td colSpan={5}>
                <span className="flex items-center gap-1 pl-0.5 leading-4">
                  <Glyph size="size-4">
                    <rect x="2.5" y="1.5" width="13" height="15" fill="#fff" stroke="#555" />
                    <path d="M9 14 13 9.500h-2V5H7v4.500H5z" fill="#dc5a2a" stroke="#8d2411" />
                  </Glyph>
                  Balance:
                </span>
              </td>
              <td className="pr-1 text-right text-[12px]">-27.00</td>
            </tr>
          </tbody>
        </table>
      </div>
      <div className="flex h-[26px] items-start border-b border-[#a0a0a0] pl-px">
        <div className="h-px w-0.5 bg-black" />
        <button type="button" className="h-5 border-x border-b border-black bg-white px-2.5 leading-[18px]">Trade</button>
        <button type="button" className="h-5 flex-1 border-t border-black pl-2.5 text-left leading-[18px] text-[#888]">
          Exposure
        </button>
      </div>
    </div>
  </section>
);

const StatusBar = () => (
  <footer className="flex h-[21px] shrink-0 items-end bg-[#efefef]">
    <p className="flex-1 pb-px pl-px leading-4">For Help, press F1</p>
    <div className="h-4 w-[71px] border-l border-[#a0a0a0]" />
    <div className="h-4 w-[71px] border-l border-[#a0a0a0]" />
    <div className="h-4 w-[68px] border-l border-[#a0a0a0]" />
    <div className="h-4 w-[70px] border-l border-[#a0a0a0]" />
    <div className="h-4 w-[66px] border-l border-[#a0a0a0]" />
    <div className="flex h-4 w-[106px] items-center gap-1 border-l border-[#a0a0a0] pl-1">
      <svg viewBox="0 0 24 14" className="h-3.5 w-6" aria-hidden="true">
        {Array.from({ length: 8 }, (_, i) => (
          <g key={i}>
            <rect x={i * 3} y="1" width="2" height={9 - i} fill="#5d7f1c" />
            <rect x={i * 3} y={11 - i} width="2" height={2 + i} fill="#8a2a1c" />
          </g>
        ))}
      </svg>
      655/3 kb
    </div>
  </footer>
);

/* ---------- order dialog ---------- */

const tickRows = ["1.14218", "1.14213", "1.14208", "1.14204", "1.14199", "1.14194", "1.14189", "1.14184", "1.14179"];

const TickChart = () => (
  <div className="mt-3 w-[298px] shrink-0 self-start border-t-2 border-r border-b border-l-2 border-t-[#8a8a8a] border-r-white border-b-white border-l-[#8a8a8a] bg-white">
    <svg viewBox="0 0 295 323" className="block h-[323px] w-[295px] text-[9px]" fill="none" role="img" aria-label="EURUSD ticks">
      <g stroke="#c4c4c4" strokeDasharray="4 3" shapeRendering="crispEdges">
        {Array.from({ length: 7 }, (_, i) => (
          <path key={i} d={`M${34.5 + i * 32} 2V320`} />
        ))}
        {tickRows.map((row, i) => (
          <path key={row} d={`M2 ${31.5 + i * 32}H251`} />
        ))}
      </g>
      <rect x="1.5" y="1.5" width="250" height="319" stroke="#000" shapeRendering="crispEdges" />
      <polyline points="2,191 4,170 5,151 7,159 10,100 14,80 18,112 20,70 24.5,21.5 252,21.5" stroke="#d4676f" />
      <polyline points="2,302 4,270 7,258 10,203 13,190 18,216 21,163 24.5,119.5 252,119.5" stroke="#1d5fa8" />
      <g fill="#000">
        <text x="4" y="12" className="text-[10px]">EURUSD</text>
        {tickRows.map((row, i) => (
          <text key={row} x="257" y={35 + i * 32}>{row}</text>
        ))}
        <text x="257" y="320">1.14174</text>
      </g>
      <rect x="253" y="16" width="41" height="11" fill="#ea6770" />
      <text x="257" y="25" fill="#fff">1.14220</text>
      <rect x="253" y="114" width="41" height="11" fill="#0f5cd0" />
      <text x="257" y="123" fill="#fff">1.14205</text>
    </svg>
  </div>
);

const Spinner: FC<{ id: string; value: string; onChange: (value: string) => void }> = ({
  id,
  value,
  onChange,
}) => (
  <div className="flex h-5 w-[105px] border border-[#7a7a7a] bg-white">
    <input
      id={id}
      value={value}
      onChange={(e) => onChange(e.target.value)}
      className="w-full min-w-0 flex-1 bg-transparent pr-1.5 text-right"
    />
    <div className="flex w-4 flex-col gap-px bg-[#a8a8a8] p-px">
      <button type="button" aria-label="Increase" className="flex flex-1 rotate-180 items-center justify-center bg-[#f0f0f0]"><Caret /></button>
      <button type="button" aria-label="Decrease" className="flex flex-1 items-center justify-center bg-[#f0f0f0]"><Caret /></button>
    </div>
  </div>
);

const OrderDialog = () => {
  const [stopLoss, setStopLoss] = useState("0.00000");
  const [takeProfit, setTakeProfit] = useState("0.00000");
  const [comment, setComment] = useState("");

  return (
    <div
      role="dialog"
      aria-label="Order"
      className="absolute top-[355px] bottom-0 left-[85px] flex w-[755px] flex-col overflow-hidden border border-b-0 border-[#3b79a8] bg-[#f0f0f0] font-['DejaVu_Sans_Condensed','Noto_Sans',sans-serif] text-[11px] shadow-[3px_0_10px_rgba(0,0,0,0.25)]"
    >
      <header className="flex h-[25px] shrink-0 items-center bg-white pr-[18px] pl-1">
        <h2 className="flex-1 font-['Open_Sans','Noto_Sans',sans-serif] text-[11px]">Order</h2>
        <div className="flex items-center gap-[35px]">
          <button type="button" aria-label="Minimize" className="flex size-2.5 items-center"><span className="h-px w-full bg-black" /></button>
          <button type="button" aria-label="Maximize" disabled className="size-2.5 border border-[#ccc]" />
          <button type="button" aria-label="Close">
            <svg viewBox="0 0 11 11" className="size-[11px]" aria-hidden="true">
              <path d="M.5.5l10 10M10.500.5l-10 10" stroke="#000" strokeWidth="1.2" />
            </svg>
          </button>
        </div>
      </header>
      <form className="flex pr-2.5 pl-[9px]" onSubmit={(e) => e.preventDefault()}>
        <TickChart />
        <div className="ml-2 min-w-0 flex-1 pt-[13px]">
          <div className="grid grid-cols-[89px_1fr] items-center gap-x-[9px] gap-y-[5px] pr-[7px]">
            <label htmlFor="symbol" className="text-right">Symbol:</label>
            <div className="relative">
              <select id="symbol" className="h-[21px] w-full appearance-none border border-[#a8a8a8] bg-[#e1e1e1] pl-0.5">
                <option>EURUSD, Euro vs US Dollar</option>
              </select>
              <Chevron />
            </div>
            <label htmlFor="volume" className="text-right">Volume:</label>
            <div className="relative w-[105px]">
              <select id="volume" className="h-[21px] w-full appearance-none border border-[#7a7a7a] bg-white pl-1.5">
                <option>1.00</option>
              </select>
              <Chevron />
            </div>
            <label htmlFor="stop-loss" className="text-right">Stop Loss:</label>
            <div className="flex h-[21px] items-center justify-between">
              <Spinner id="stop-loss" value={stopLoss} onChange={setStopLoss} />
              <div className="flex items-center gap-2">
                <label htmlFor="take-profit">Take Profit:</label>
                <Spinner id="take-profit" value={takeProfit} onChange={setTakeProfit} />
              </div>
            </div>
            <label htmlFor="comment" className="text-right">Comment:</label>
            <div className="flex h-[21px] items-center">
              <input
                id="comment"
                value={comment}
                onChange={(e) => setComment(e.target.value)}
                className="h-5 w-full border border-[#7a7a7a] bg-white px-1"
              />
            </div>
            <label htmlFor="type" className="text-right">Type:</label>
            <div className="relative">
              <select id="type" className="h-[21px] w-full appearance-none border border-[#a8a8a8] bg-[#e1e1e1] pl-0.5">
                <option>Market Execution</option>
              </select>
              <Chevron />
            </div>
          </div>

          <fieldset className="mt-[7px] h-[194px] border border-[#dcdcdc] px-[15px]">
            <legend className="-ml-3 px-1 leading-4">Market Execution</legend>
            <p className="mt-[17px] text-center text-[26px] leading-8">
              1.1420<span className="text-[19px]">5</span> / 1.1422<span className="text-[19px]">0</span>
            </p>
            <div className="mt-4 grid grid-cols-2 gap-x-6">
              <button type="button" className="h-[21px] border border-[#adadad] bg-[#f4e4e4] p-px">
                <span className="block h-full rounded-[1px] border border-[#d66a6a] bg-[#ff8080] leading-4">Sell by Market</span>
              </button>
              <button type="button" className="h-[21px] border border-[#adadad] bg-[#e4eaf8] p-px">
                <span className="block h-full rounded-[1px] border border-[#7f98d8] bg-[#a0bfff] leading-4">Buy by Market</span>
              </button>
            </div>
            <div className="mt-[9px] h-[21px] border border-[#c2c2c2] bg-[#cbcbcb]" />
            <p className="mt-3.5 text-center leading-[13px]">
              Attention! The trade will be executed at market conditions, difference with
              <br />
              requested price may be significant!
            </p>
          </fieldset>
        </div>
      </form>
    </div>
  );
};

/* ---------- page ---------- */

const TitleBar = () => (
  <header className="flex h-[21px] shrink-0 items-center bg-white text-[12px] text-[#9a9a9a]">
    <svg viewBox="0 0 16 12" className="ml-px h-3 w-4" fill="none" aria-hidden="true">
      <path d="M8 1.500H1.500M8 10.500H1.500M2 6h5M7 1v10" stroke="#1a1a1a" strokeWidth="2.6" />
      <path d="M8.500 1.500h5.500v9h-5.500M9 6h5" stroke="#b01822" strokeWidth="2.6" />
    </svg>
    <span className="ml-[5px] w-[41px]">100</span>
    <h1>: ELRICSBrothersLtd-Demo - Demo Account</h1>
    <div className="ml-auto flex items-center gap-[35px] overflow-hidden pb-1">
      <button type="button" aria-label="Minimize" className="h-px w-2.5 bg-[#888]" />
      <button type="button" aria-label="Restore">
        <svg viewBox="0 0 10 10" className="size-2.5" fill="none" stroke="#888" aria-hidden="true">
          <path d="M.5 2.500h7v7h-7zM2.500 2.500v-2h7v7h-2" />
        </svg>
      </button>
      <button type="button" aria-label="Close" className="w-[7px] overflow-hidden">
        <svg viewBox="0 0 10 10" className="size-2.5 max-w-none" stroke="#888" aria-hidden="true">
          <path d="M0 0l10 10M10 0 0 10" />
        </svg>
      </button>
    </div>
  </header>
);

const App: FC = () => (
  <div className="relative flex h-screen w-full flex-col overflow-hidden bg-[#efefef] font-['Open_Sans','Noto_Sans',sans-serif] text-[11px] text-[#111]">
    <TitleBar />
    <MenuBar />
    <div className="h-px shrink-0 bg-[#a0a0a0]" />
    <StandardToolbar />
    <LineToolbar />
    <main className="flex min-h-0 flex-1">
      <aside className="flex w-[187px] shrink-0 flex-col">
        <MarketWatch />
        <Navigator />
      </aside>
      <Workspace />
    </main>
    <Terminal />
    <StatusBar />
    <OrderDialog />
  </div>
);

export default App;
